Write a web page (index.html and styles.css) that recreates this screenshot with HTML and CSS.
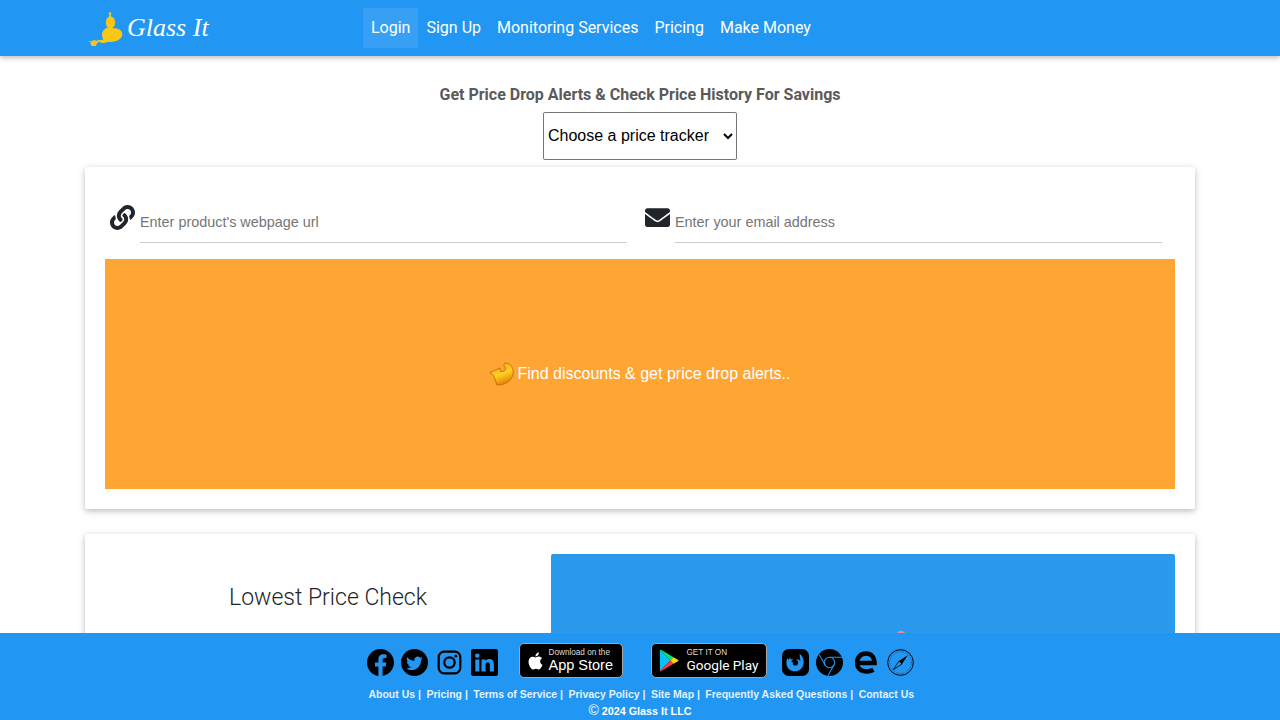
FILE: index.html
```html
<!DOCTYPE html>
<html lang="en">
<head>
    <meta charset="UTF-8">
    <meta name="viewport" content="width=device-width, initial-scale=1.0">
    <title>Glass It</title>
    <link rel="stylesheet" href="styles.css">
</head>
<body>

    <nav class="topbar">
        <a class="brand" href="#">
            <!-- genie lamp -->
            <svg class="brand-mark" width="36" height="36" viewBox="0 0 36 36" fill="#f7c815">
                <circle cx="22" cy="2.500" r="1.300"/>
                <path d="M21.300 3h1.400l.5 4h-2.400z"/>
                <ellipse cx="22.500" cy="11.500" rx="4.700" ry="6"/>
                <path d="M19 16.500c-2.500 1.500-5 3.500-5 7 0 2 .5 3.500 1.500 4.500-1.500 1.300-3.500 1.500-5.500.8l-1 .7c2.500 2.800 7.500 3 10.500 1.500 7 .5 14.500-2 14.800-7.500.2-4-3.800-6.500-7.800-6.300z"/>
                <path d="M0 30l3.500.4c1-1.400 4-1.400 5.500-.4l2 .6-2 2c-.6 1-1 1.700-1 2.400H3.500c0-.8-.3-1.500-1-2.100l.2-1.500z"/>
            </svg>
            <span class="brand-name">Glass It</span>
        </a>
        <ul class="menu">
            <li><a class="menu-link active" href="#">Login</a></li>
            <li><a class="menu-link" href="#">Sign Up</a></li>
            <li><a class="menu-link" href="#">Monitoring Services</a></li>
            <li><a class="menu-link" href="#">Pricing</a></li>
            <li><a class="menu-link" href="#">Make Money</a></li>
        </ul>
    </nav>

    <main class="page">
        <h2 class="tagline">Get Price Drop Alerts &amp; Check Price History For Savings</h2>
        <div class="tracker">
            <select class="tracker-select">
                <option>Choose a price tracker</option>
            </select>
        </div>

        <section class="card search-card">
            <div class="fields">
                <label class="field">
                    <svg class="field-icon" viewBox="0 0 512 512"><path d="M326.612 185.391c59.747 59.809 58.927 155.698.36 214.59-.11.12-.24.25-.36.37l-67.2 67.2c-59.27 59.27-155.699 59.262-214.96 0-59.27-59.26-59.27-155.7 0-214.96l37.106-37.106c9.84-9.84 26.786-3.3 27.294 10.606.648 17.722 3.826 35.527 9.69 52.721 1.986 5.822.567 12.262-3.783 16.612l-13.087 13.087c-28.026 28.026-28.905 73.66-1.155 101.96 28.024 28.579 74.086 28.749 102.325.51l67.2-67.19c28.191-28.191 28.073-73.757 0-101.83-3.701-3.694-7.429-6.564-10.341-8.569a16.037 16.037 0 0 1-6.947-12.606c-.396-10.567 3.348-21.456 11.698-29.806l21.054-21.055c5.521-5.521 14.182-6.199 20.584-1.731a152.482 152.482 0 0 1 20.522 17.197zM467.547 44.449c-59.261-59.262-155.69-59.27-214.96 0l-67.2 67.2c-.12.12-.25.25-.36.37-58.566 58.892-59.387 154.781.36 214.59a152.454 152.454 0 0 0 20.521 17.196c6.402 4.468 15.064 3.789 20.584-1.731l21.054-21.055c8.35-8.35 12.094-19.239 11.698-29.806a16.037 16.037 0 0 0-6.947-12.606c-2.912-2.005-6.64-4.875-10.341-8.569-28.073-28.073-28.191-73.639 0-101.83l67.2-67.19c28.239-28.239 74.3-28.069 102.325.51 27.75 28.3 26.872 73.934-1.155 101.96l-13.087 13.087c-4.35 4.35-5.769 10.79-3.783 16.612 5.864 17.194 9.042 34.999 9.69 52.721.509 13.906 17.454 20.446 27.294 10.606l37.106-37.106c59.271-59.259 59.271-155.699.001-214.959z"/></svg>
                    <input class="field-input" type="text" placeholder="Enter product's webpage url">
                </label>
                <label class="field">
                    <svg class="field-icon" viewBox="0 0 512 512"><path d="M502.3 190.8c3.9-3.1 9.7-.2 9.7 4.7V400c0 26.5-21.5 48-48 48H48c-26.5 0-48-21.5-48-48V195.6c0-5 5.7-7.8 9.7-4.700 22.400 17.400 52.100 39.500 154.100 113.600 21.100 15.400 56.700 47.800 92.200 47.600 35.700.3 72-32.800 92.300-47.600 102-74.100 131.600-96.300 154-113.700zM256 320c23.200.4 56.600-29.200 73.400-41.400 132.700-96.300 142.800-104.700 173.400-128.700 5.800-4.500 9.200-11.500 9.200-18.900v-19c0-26.500-21.500-48-48-48H48C21.500 64 0 85.500 0 112v19c0 7.400 3.400 14.300 9.200 18.900 30.600 23.900 40.700 32.400 173.400 128.700 16.800 12.200 50.200 41.800 73.400 41.400z"/></svg>
                    <input class="field-input" type="text" placeholder="Enter your email address">
                </label>
            </div>
            <button class="find-btn" type="button">
                <svg class="find-icon" width="26" height="24" viewBox="0 0 26 24">
                    <defs>
                        <linearGradient id="swirl" x1="0" y1="0" x2="0.4" y2="1">
                            <stop offset="0" stop-color="#f39a1e"/>
                            <stop offset="0.6" stop-color="#ffd21f"/>
                            <stop offset="1" stop-color="#e8840f"/>
                        </linearGradient>
                    </defs>
                    <path fill="url(#swirl)" stroke="#b9650c" stroke-width="0.8" d="M16 1C22 1 25 7 24 12 23 19 16 23 8 23L4.500 13.500.8 10.500 11 6l.5 3.500C14 9.500 16 9 16.500 7.500 17 5.500 15.500 4 14.500 3.500z"/>
                </svg>
                <span>Find discounts &amp; get price drop alerts..</span>
            </button>
        </section>

        <section class="card check-card">
            <div class="check-copy">
                <h3 class="check-title">Lowest Price Check</h3>
            </div>
            <div class="check-panel">
                <span class="panel-dot"></span>
            </div>
        </section>
    </main>

    <footer class="footer">
        <div class="badges">
            <div class="social">
                <svg class="ico" viewBox="0 0 16 16"><path d="M16 8.049c0-4.446-3.582-8.05-8-8.05C3.58 0-.002 3.603-.002 8.05c0 4.017 2.926 7.347 6.75 7.951v-5.625h-2.03V8.05H6.75V6.275c0-2.017 1.195-3.131 3.022-3.131.876 0 1.791.157 1.791.157v1.98h-1.009c-.993 0-1.303.621-1.303 1.258v1.51h2.218l-.354 2.326H9.25V16c3.824-.604 6.75-3.934 6.75-7.951z"/></svg>
                <svg class="ico" viewBox="0 0 16 16"><circle cx="8" cy="8" r="8"/><g transform="translate(3.100 3.300) scale(.61)"><path fill="#2196f3" d="M5.026 15c6.038 0 9.341-5.003 9.341-9.334 0-.14 0-.282-.006-.422A6.685 6.685 0 0 0 16 3.542a6.658 6.658 0 0 1-1.889.518 3.301 3.301 0 0 0 1.447-1.817 6.533 6.533 0 0 1-2.087.793A3.286 3.286 0 0 0 7.875 6.03a9.325 9.325 0 0 1-6.767-3.429 3.289 3.289 0 0 0 1.018 4.382A3.323 3.323 0 0 1 .64 6.575v.045a3.288 3.288 0 0 0 2.632 3.218 3.203 3.203 0 0 1-.865.115 3.23 3.23 0 0 1-.614-.057 3.283 3.283 0 0 0 3.067 2.277A6.588 6.588 0 0 1 .78 13.58a6.32 6.32 0 0 1-.78-.045A9.344 9.344 0 0 0 5.026 15z"/></g></svg>
                <svg class="ico ico-insta" viewBox="-1.500 -1.500 27 27" fill="none" stroke="#000"><rect x="1.200" y="1.200" width="21.600" height="21.600" rx="5.500" stroke-width="2.200"/><circle cx="12" cy="12" r="5.200" stroke-width="2.200"/><circle cx="18.300" cy="5.700" r="1.400" fill="#000" stroke="none"/></svg>
                <svg class="ico" viewBox="0 0 16 16"><path d="M0 1.146C0 .513.526 0 1.175 0h13.65C15.474 0 16 .513 16 1.146v13.708c0 .633-.526 1.146-1.175 1.146H1.175C.526 16 0 15.487 0 14.854V1.146zm4.943 12.248V6.169H2.542v7.225h2.401zm-1.2-8.212c.837 0 1.358-.554 1.358-1.248-.015-.709-.52-1.248-1.342-1.248-.822 0-1.359.54-1.359 1.248 0 .694.521 1.248 1.327 1.248h.016zm4.908 8.212V9.359c0-.216.016-.432.08-.586.173-.431.568-.878 1.232-.878.869 0 1.216.662 1.216 1.634v3.865h2.401V9.25c0-2.22-1.184-3.252-2.764-3.252-1.274 0-1.845.7-2.165 1.193v.025h-.016a5.54 5.54 0 0 1 .016-.025V6.169h-2.4c.03.678 0 7.225 0 7.225h2.4z"/></svg>
            </div>

            <a class="store app-store" href="#">
                <svg class="store-logo" width="17" height="20" viewBox="0 0 16 16"><path fill="#fff" d="M11.182.008C11.148-.03 9.923.023 8.857 1.18c-1.066 1.156-.902 2.482-.878 2.516.024.034 1.52.087 2.475-1.258.955-1.345.762-2.391.728-2.43Zm3.314 11.733c-.048-.096-2.325-1.234-2.113-3.422.212-2.189 1.675-2.789 1.698-2.854.023-.065-.597-.79-1.254-1.157a3.692 3.692 0 0 0-1.563-.434c-.108-.003-.483-.095-1.254.116-.508.139-1.653.589-1.968.607-.316.018-1.256-.522-2.267-.665-.647-.1-1.333.105-1.824.303-.49.197-1.422.759-2.074 2.242-.652 1.482-.311 3.83-.067 4.56.244.729.625 1.924 1.273 2.796.576.984 1.34 1.667 1.659 1.899.319.232 1.219.386 1.843.067.502-.308 1.408-.485 1.766-.472.357.013 1.061.154 1.782.539.571.197 1.111.115 1.652-.105.541-.221 1.324-1.059 2.238-2.758.347-.79.505-1.217.473-1.282Z"/></svg>
                <span class="store-text">
                    <span class="store-small">Download on the</span>
                    <span class="store-big">App Store</span>
                </span>
            </a>

            <a class="store play-store" href="#">
                <svg class="store-logo" width="20" height="23" viewBox="0 0 22 25" preserveAspectRatio="none">
                    <path fill="#00c3ff" d="M1 1v23l11.500-11.500z"/>
                    <path fill="#00e676" d="M1 1c.4-.3 1-.3 1.700.1L16 8.900l-3.500 3.600z"/>
                    <path fill="#ff3a44" d="M1 24c.4.3 1 .3 1.700-.1L16 16.100l-3.500-3.600z"/>
                    <path fill="#ffd400" d="M16 8.900l4.800 2.700c.9.500.9 1.300 0 1.800L16 16.100l-3.500-3.600z"/>
                </svg>
                <span class="store-text">
                    <span class="store-small caps">GET IT ON</span>
                    <span class="store-big google">Google Play</span>
                </span>
            </a>

            <div class="browsers">
                <!-- firefox -->
                <svg class="ico" viewBox="0 0 26 26"><rect width="26" height="26" rx="6.500"/><path fill="#2196f3" d="M17 4.500c1.200 1 3.700 3.500 3.900 7.500.3 5.300-3.500 9.500-8.400 9.500-4.700 0-8.300-3.600-8.300-8.300 0-1.800.5-3.500 1.300-4.500l.4 1.800c.5-.9 1.300-1.800 2.300-2.400-.2.800-.1 1.500.1 2 .9-.5 2.300-.4 3.200.3-1.600.3-2.500 1.200-2.400 1.900.1.500 1.300.7 1.800 1-.9.800-.4 2.100 1 2.500 1.800.5 3.500-.6 3.700-2.400.2-1.400-.8-2.800-2-3.400 1.900-.2 3.300.6 4.100 1.700-.1-2.500-.9-4.900-.7-7.200z"/></svg>
                <!-- chrome -->
                <svg class="ico" viewBox="0 0 26 26"><circle cx="13" cy="13" r="13"/><circle cx="13" cy="13" r="5" fill="none" stroke="#2196f3" stroke-width="1"/><path fill="none" stroke="#2196f3" stroke-width="1" d="M13 8h12M8.700 15.500L3 5.500M17.300 15.500L11.500 25.800"/></svg>
                <!-- edge -->
                <svg class="ico ico-edge" viewBox="2.500 2.700 21.500 22.100"><path fill="none" stroke="#000" stroke-width="4.500" d="M4.500 14.300h17c0-5.800-3.400-9.300-8.200-9.300-5.200 0-8.800 3.800-8.800 9 0 5 3.600 8.500 9.300 8.500 2.500 0 4.800-.6 6.700-1.700"/></svg>
                <!-- safari -->
                <svg class="ico" viewBox="0 0 28 28"><circle cx="14" cy="14" r="13.300" fill="none" stroke="#000" stroke-width="1"/><circle cx="14" cy="14" r="11.300" fill="none" stroke="#000" stroke-width=".5" stroke-dasharray="1 1.400"/><path d="M21.500 6.500L15.600 15.600 12.400 12.400z"/><path fill="none" stroke="#000" stroke-width=".8" d="M12.400 12.400L6.500 21.500l9.100-5.900z"/></svg>
            </div>
        </div>

        <div class="footer-links">
            <a href="#">About Us</a> |
            <a href="#">Pricing</a> |
            <a href="#">Terms of Service</a> |
            <a href="#">Privacy Policy</a> |
            <a href="#">Site Map</a> |
            <a href="#">Frequently Asked Questions</a> |
            <a href="#">Contact Us</a>
        </div>
        <div class="copyright"><span class="copy-mark">©</span> 2024 Glass It LLC</div>
    </footer>

</body>
</html>
```

FILE: styles.css
```css
* {
    box-sizing: border-box;
}
body {
    margin: 0;
    background-color: #fff;
    font-family: "Liberation Sans", Arial, sans-serif;
    color: #212529;
}
a {
    text-decoration: none;
}

/* top bar */
.topbar {
    display: flex;
    align-items: center;
    height: 56px;
    padding: 0 85px;
    background-color: #2196f3;
    box-shadow: 0 2px 5px rgba(0, 0, 0, 0.26);
}
.brand {
    display: flex;
    align-items: center;
    gap: 3px;
    width: 278px;
    padding-left: 3px;
    color: #fff;
}
.brand-mark {
    margin-top: 1px;
}
.brand-name {
    font-family: "Liberation Serif", serif;
    font-style: italic;
    font-size: 26px;
    white-space: nowrap;
}
.menu {
    display: flex;
    margin: 0;
    padding: 0;
    list-style: none;
}
.menu-link {
    display: block;
    height: 40px;
    padding: 0 8px;
    font-family: Roboto, sans-serif;
    font-size: 16px;
    line-height: 40px;
    color: #fff;
}
.menu-link.active {
    background-color: rgba(255, 255, 255, 0.1);
}

/* main column */
.page {
    padding: 0 85px;
}
.tagline {
    margin: 29px 0 7px;
    font-family: Roboto, sans-serif;
    font-size: 16px;
    font-weight: 700;
    line-height: 20px;
    color: #5a5a5a;
    text-align: center;
}
.tracker {
    display: flex;
    justify-content: center;
}
.tracker-select {
    width: 194px;
    height: 48px;
    padding: 0 0 2px 0;
    font-family: "Liberation Sans", Arial, sans-serif;
    font-size: 16px;
    color: #000;
    background-color: #fff;
    border: 1px solid #767676;
    border-radius: 2px;
}
.card {
    background-color: #fff;
    border-radius: 2px;
    box-shadow: 0 2px 5px rgba(0, 0, 0, 0.16), 0 2px 10px rgba(0, 0, 0, 0.12);
}
.search-card {
    margin-top: 7px;
    padding: 20px;
    height: 342px;
}
.fields {
    display: grid;
    grid-template-columns: 1fr 1fr;
    height: 72px;
}
.field {
    display: flex;
    align-items: flex-start;
    padding: 15px 13px 0 5px;
}
.field-icon {
    flex: none;
    width: 25px;
    height: 25px;
    margin: 3px 5px 0 0;
    fill: #212529;
}
.field-input {
    flex: 1;
    min-width: 0;
    height: 42px;
    margin-top: -1px;
    padding: 0;
    font-family: "Liberation Sans", Arial, sans-serif;
    font-size: 14.4px;
    border: none;
    border-bottom: 1px solid #ccc;
    background: none;
    outline: none;
}
.field-input::placeholder {
    color: #757575;
}
.find-btn {
    display: flex;
    align-items: center;
    justify-content: center;
    gap: 2px;
    width: 100%;
    height: 230px;
    padding: 0;
    font-family: "Liberation Sans", Arial, sans-serif;
    font-size: 16px;
    color: #fff;
    background-color: #ffa533;
    border: none;
}

/* second card, runs under the footer */
.check-card {
    display: flex;
    margin-top: 25px;
    padding: 20px 20px 0;
    height: 186px;
}
.check-copy {
    width: 446px;
    flex: none;
    text-align: center;
}
.check-title {
    margin: 30px 0 0;
    font-family: Roboto, sans-serif;
    font-size: 23px;
    font-weight: 300;
    line-height: 28px;
    color: #212529;
}
.check-panel {
    flex: 1;
    padding: 77px 0 0 345px;
    background-color: #2b9aec;
    border-radius: 2px 2px 0 0;
}
.panel-dot {
    display: block;
    width: 10px;
    height: 10px;
    background-color: #ef8aa0;
    border-radius: 50%;
}

/* footer */
.footer {
    position: fixed;
    left: 0;
    right: 0;
    bottom: 0;
    height: 87px;
    padding-top: 10px;
    background-color: #2196f3;
    color: #fff;
    text-align: center;
}
.badges {
    display: flex;
    justify-content: center;
    align-items: flex-start;
    height: 36px;
}
.social,
.browsers {
    display: flex;
    align-items: center;
    margin-top: 6px;
}
.ico {
    display: block;
    width: 27px;
    height: 27px;
    margin-right: 7px;
}
.ico-insta {
    margin: 0 8px 0 1px;
}
.ico-edge {
    width: 22px;
    height: 23px;
    margin: 0 10px 0 5px;
}
.browsers .ico:last-child {
    margin-right: 0;
}
.store {
    display: flex;
    align-items: center;
    height: 35px;
    color: #fff;
    background-color: #000;
    border: 1px solid #a6a6a6;
    border-radius: 5px;
}
.app-store {
    width: 104px;
    margin: 0 28px 0 14px;
    padding-left: 7px;
    gap: 5px;
}
.play-store {
    width: 116px;
    margin-right: 15px;
    padding-left: 7px;
    gap: 8px;
}
.store-text {
    display: flex;
    flex-direction: column;
    text-align: left;
    white-space: nowrap;
}
.store-small {
    font-size: 8.2px;
    line-height: 9px;
    color: #ddd;
}
.store-big {
    font-size: 14.5px;
    line-height: 16px;
}
.store-big.google {
    font-family: Roboto, sans-serif;
    font-size: 13.6px;
}
.footer-links {
    margin-top: 7px;
    font-size: 10.5px;
    font-weight: 700;
    line-height: 16px;
    color: #e3f2fd;
}
.footer-links a {
    margin-left: 2.5px;
    color: #e3f2fd;
}
.copyright {
    margin-top: 2px;
    font-size: 10.75px;
    font-weight: 700;
    line-height: 15px;
}
.copy-mark {
    font-size: 14px;
    font-weight: 400;
    line-height: 10px;
}
```
